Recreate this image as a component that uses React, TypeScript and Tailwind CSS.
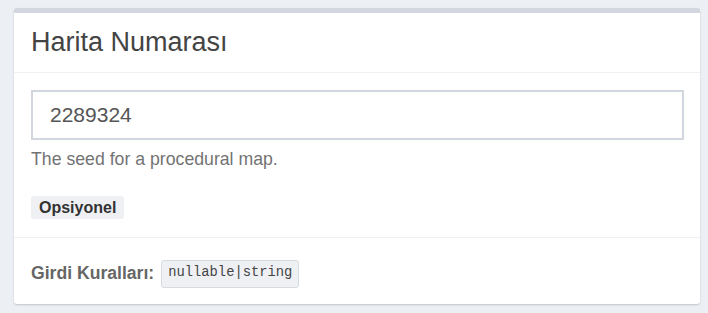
export default function App() {
  return (
    <div className="min-h-[313px] w-[708px] bg-[#ecf0f5] pl-[14px] pt-[8px] font-['Liberation_Sans',Arial,sans-serif]">
      <div className="w-[686px] rounded-[3px] border-t-[5px] border-[#d2d6de] bg-white shadow-[0_1px_2px_rgba(0,0,0,0.18)]">
        {/* Header */}
        <div className="flex h-[60px] items-center border-b border-[#f1f1f1] pl-[17px]">
          <h3 className="text-[27px] leading-none text-[#444]">Harita Numarası</h3>
        </div>

        {/* Body */}
        <div className="px-[17px] pb-[17px] pt-[17px]">
          <div className="flex h-[50px] w-[653px] items-center border-2 border-[#d2d6de] px-[17px] text-[21px] text-[#555]">
            2289324
          </div>
          <p className="mt-[6px] text-[17.7px] leading-[26px] text-[#737373]">The seed for a procedural map.</p>
          <span className="mt-[24px] inline-flex h-[23px] items-center rounded-[3px] bg-[#eef0f3] px-[8px] text-[16px] font-bold text-[#333]">
            Opsiyonel
          </span>
        </div>

        {/* Footer */}
        <div className="flex items-center gap-[7px] border-t border-[#f1f1f1] pb-[16px] pl-[17px] pt-[22px]">
          <span className="text-[17.6px] font-bold text-[#666]">Girdi Kuralları:</span>
          <code className="flex h-[28px] items-center rounded-[3px] border border-[#d6dbe0] bg-[#eef0f4] px-[6px] font-['Liberation_Mono',monospace] text-[13.8px] text-[#444]">
            nullable|string
          </code>
        </div>
      </div>
    </div>
  )
}
